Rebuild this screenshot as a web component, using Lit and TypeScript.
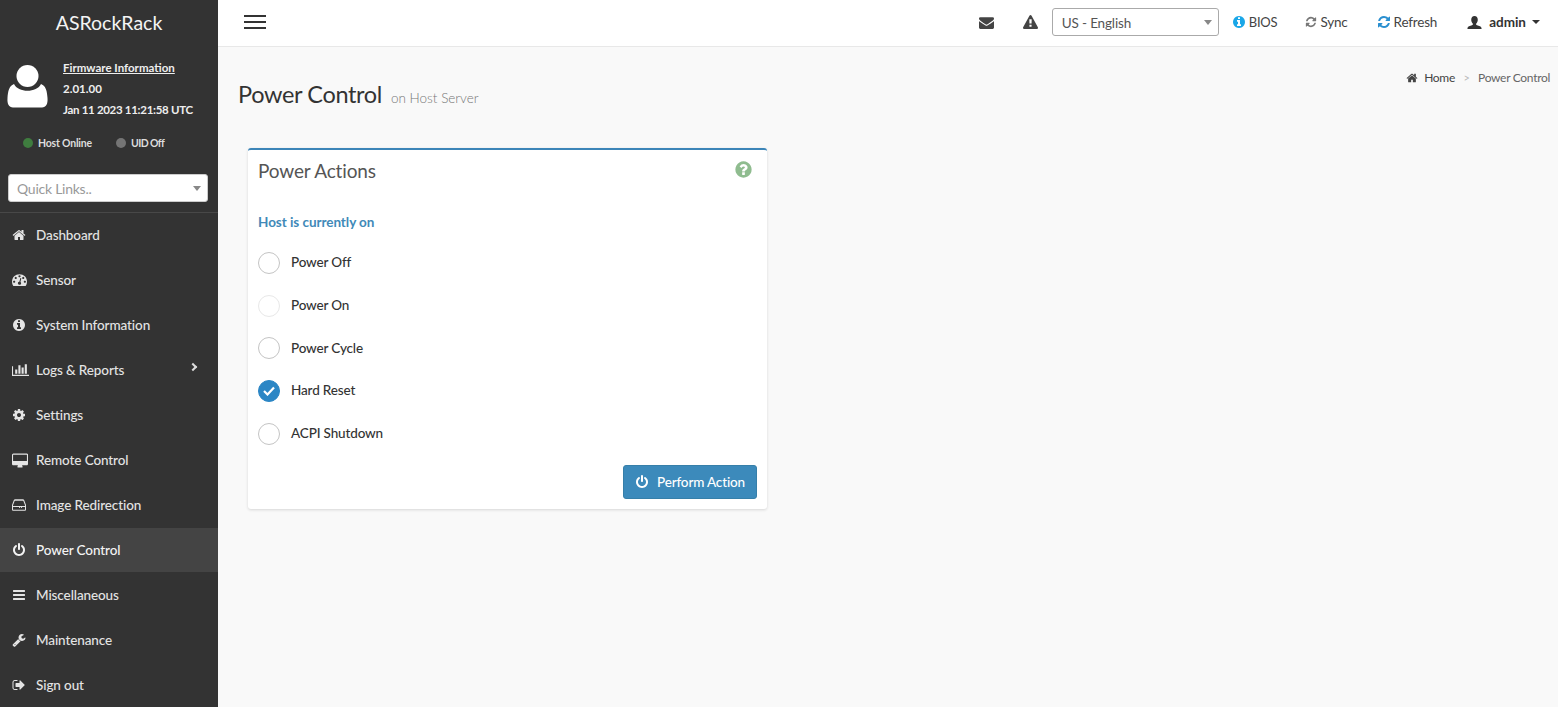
import { LitElement, html, css, svg } from "lit";
import { customElement } from "lit/decorators.js";

const P: Record<string, [number, string]> = {
  home: [1792, "M1472 992v480q0 26-19 45t-45 19h-384v-384h-256v384h-384q-26 0-45-19t-19-45v-480q0-1 .5-3t.5-3l575-474 575 474q1 2 1 6zm223-69l-62 74q-8 9-21 11h-3q-13 0-21-7l-692-577-692 577q-12 8-24 7-13-2-21-11l-62-74q-8-10-7-23.5t11-21.5l719-599q32-26 76-26t76 26l244 204v-195q0-14 9-23t23-9h192q14 0 23 9t9 23v408l219 182q10 8 11 21.5t-7 23.5z"],
  gauge: [1792, "M384 1152q0-53-37.5-90.5t-90.5-37.5-90.5 37.5-37.5 90.5 37.5 90.5 90.5 37.5 90.5-37.5 37.5-90.5zm192-448q0-53-37.5-90.5t-90.5-37.5-90.5 37.5-37.5 90.5 37.5 90.5 90.5 37.5 90.5-37.5 37.5-90.5zm428 481l101-382q6-26-7.5-48.5t-38.5-29.5-48 6.5-30 39.5l-101 382q-60 5-107 43.5t-63 98.5q-20 77 20 146t117 89 146-20 89-117q16-60-6-117t-72-91zm660-33q0-53-37.5-90.5t-90.5-37.5-90.5 37.5-37.5 90.5 37.5 90.5 90.5 37.5 90.5-37.5 37.5-90.5zm-640-640q0-53-37.5-90.5t-90.5-37.5-90.5 37.5-37.5 90.5 37.5 90.5 90.5 37.5 90.5-37.5 37.5-90.5zm448 192q0-53-37.5-90.5t-90.5-37.5-90.5 37.5-37.5 90.5 37.5 90.5 90.5 37.5 90.5-37.5 37.5-90.5zm320 448q0 261-141 483-19 29-54 29h-1402q-35 0-54-29-141-221-141-483 0-182 71-348t191-286 286-191 348-71 348 71 286 191 191 286 71 348z"],
  info: [1792, "M1152 1376v-160q0-14-9-23t-23-9h-96v-512q0-14-9-23t-23-9h-320q-14 0-23 9t-9 23v160q0 14 9 23t23 9h96v320h-96q-14 0-23 9t-9 23v160q0 14 9 23t23 9h448q14 0 23-9t9-23zm-128-896v-160q0-14-9-23t-23-9h-192q-14 0-23 9t-9 23v160q0 14 9 23t23 9h192q14 0 23-9t9-23zm640 416q0 209-103 385.5t-279.5 279.5-385.5 103-385.5-103-279.5-279.5-103-385.5 103-385.5 279.5-279.5 385.5-103 385.5 103 279.5 279.5 103 385.5z"],
  chart: [2048, "M640 896v512h-256v-512h256zm384-512v1024h-256v-1024h256zm1024 1152v128h-2048v-1152h128v1024h1920zm-640-896v768h-256v-768h256zm384-384v1152h-256v-1152h256z"],
  cog: [1792, "M1152 896q0-106-75-181t-181-75-181 75-75 181 75 181 181 75 181-75 75-181zm512-109v222q0 12-8 23t-20 13l-185 28q-19 54-39 91 35 50 107 138 10 12 10 25t-9 23q-27 37-99 108t-94 71q-12 0-26-9l-138-108q-44 23-91 38-16 136-29 186-7 28-36 28h-222q-14 0-24.5-8.5t-11.5-21.5l-28-184q-49-16-90-37l-141 107q-10 9-25 9-14 0-25-11-126-114-165-168-7-10-7-23 0-12 8-23 15-21 51-66.5t54-70.5q-27-50-41-99l-183-27q-13-2-21-12.5t-8-23.5v-222q0-12 8-23t19-13l186-28q14-46 39-92-40-57-107-138-10-12-10-24 0-10 9-23 26-36 98.5-107.5t94.5-71.5q13 0 26 10l138 107q44-23 91-38 16-136 29-186 7-28 36-28h222q14 0 24.5 8.5t11.5 21.5l28 184q49 16 90 37l142-107q9-9 24-9 13 0 25 10 129 119 165 170 7 8 7 22 0 12-8 23-15 21-51 66.5t-54 70.5q26 50 41 98l183 28q13 2 21 12.5t8 23.5z"],
  desktop: [1920, "M1792 992v-704q0-13-9.5-22.5t-22.5-9.5h-1600q-13 0-22.5 9.5t-9.5 22.5v704q0 13 9.5 22.5t22.5 9.5h1600q13 0 22.5-9.5t9.5-22.5zm128-704v1088q0 66-47 113t-113 47h-544q0 37 16 77.5t32 71 16 43.5q0 26-19 45t-45 19h-512q-26 0-45-19t-19-45q0-14 16-44t32-70 16-78h-544q-66 0-113-47t-47-113v-1088q0-66 47-113t113-47h1632q66 0 113 47t47 113z"],
  hdd: [1792, "M1040 1216a64 64 0 1 0 0 .1zm256 0a64 64 0 1 0 0 .1zM128 1024h1536v-96l-210-560q-8-22-30-22h-1056q-22 0-30 22l-210 560zm-128 0v-96q0-30 11-60l230-600q18-48 60-78t93-30h1004q51 0 93 30t60 78l230 600q11 30 11 60v544q0 66-47 113t-113 47h-1472q-66 0-113-47t-47-113zm160 128q-32 0-32 32v288q0 32 32 32h1472q32 0 32-32v-288q0-32-32-32z"],
  power: [1792, "M1664 896q0 156-61 298t-164 245-245 164-298 61-298-61-245-164-164-245-61-298q0-182 80.5-343t226.5-270q43-32 95.5-25t83.5 50q32 42 24.5 94.5t-49.5 84.5q-98 74-151.5 181t-53.5 228q0 104 40.5 198.5t109.5 163.5 163.5 109.5 198.5 40.5 198.5-40.5 163.5-109.5 109.5-163.5 40.5-198.5q0-121-53.5-228t-151.5-181q-42-32-49.5-84.5t24.5-94.5q31-43 84-50t95 25q146 109 226.5 270t80.5 343zm-640-768v640q0 52-38 90t-90 38-90-38-38-90v-640q0-52 38-90t90-38 90 38 38 90z"],
  bars: [1792, "M1664 1344v128q0 26-19 45t-45 19h-1408q-26 0-45-19t-19-45v-128q0-26 19-45t45-19h1408q26 0 45 19t19 45zm0-512v128q0 26-19 45t-45 19h-1408q-26 0-45-19t-19-45v-128q0-26 19-45t45-19h1408q26 0 45 19t19 45zm0-512v128q0 26-19 45t-45 19h-1408q-26 0-45-19t-19-45v-128q0-26 19-45t45-19h1408q26 0 45 19t19 45z"],
  wrench: [1792, "M448 1472q0-26-19-45t-45-19-45 19-19 45 19 45 45 19 45-19 19-45zm644-420l-682 682q-37 37-90 37-52 0-91-37l-106-108q-38-36-38-90 0-53 38-91l681-681q39 98 114.5 173.5t173.5 114.5zm634-435q0 39-23 106-47 134-164.5 217.5t-258.5 83.5q-185 0-316.5-131.5t-131.5-316.5 131.5-316.5 316.5-131.5q58 0 121.5 16.5t107.5 46.5q16 11 16 28t-16 28l-293 169v224l193 107q5-3 79-48.5t135.5-81 70.5-35.5q15 0 23.5 10t8.5 25z"],
  signout: [1792, "M704 1440q0 4 1 20t.5 26.5-3 23.5-10 19.5-20.5 6.5h-320q-119 0-203.5-84.5t-84.5-203.5v-704q0-119 84.5-203.5t203.5-84.5h320q13 0 22.5 9.5t9.5 22.5q0 4 1 20t.5 26.5-3 23.5-10 19.5-20.5 6.5h-320q-66 0-113 47t-47 113v704q0 66 47 113t113 47h312l11.5 1 11.5 3 8 5.5 7 9 2 13.5zm928-544q0 26-19 45l-544 544q-19 19-45 19t-45-19-19-45v-288h-448q-26 0-45-19t-19-45v-384q0-26 19-45t45-19h448v-288q0-26 19-45t45-19 45 19l544 544q19 19 19 45z"],
  envelope: [1792, "M1792 710v794q0 66-47 113t-113 47h-1472q-66 0-113-47t-47-113v-794q44 49 101 87 362 246 497 345 57 42 92.5 65.5t94.5 48 110 24.5h2q51 0 110-24.5t94.5-48 92.5-65.5q170-123 498-345 57-39 100-87zm0-294q0 79-49 151t-122 123q-376 261-468 325-10 7-42.5 30.5t-54 38-52 32.5-57.5 27-50 9h-2q-23 0-50-9t-57.5-27-52-32.5-54-38-42.5-30.5q-91-64-262-182.5t-205-142.5q-62-42-117-115.5t-55-136.5q0-78 41.5-130t118.5-52h1472q65 0 112.5 47t47.5 113z"],
  warning: [1792, "M1024 1375v-190q0-14-9.5-23.5t-22.5-9.5h-192q-13 0-22.5 9.5t-9.5 23.5v190q0 14 9.5 23.5t22.5 9.5h192q13 0 22.5-9.5t9.5-23.5zm-2-374l18-459q0-12-10-19-13-11-24-11h-220q-11 0-24 11-10 7-10 21l17 457q0 10 10 16.5t24 6.5h185q14 0 23.5-6.5t10.5-16.5zm-14-934l768 1408q35 63-2 126-17 29-46.5 46t-63.5 17h-1536q-34 0-63.5-17t-46.5-46q-37-63-2-126l768-1408q17-31 47-49t65-18 65 18 47 49z"],
  refresh: [1792, "M1639 1056q0 5-1 7-64 268-268 434.5t-478 166.5q-146 0-282.5-55t-243.5-157l-129 129q-19 19-45 19t-45-19-19-45v-448q0-26 19-45t45-19h448q26 0 45 19t19 45-19 45l-137 137q71 66 161 102t187 36q134 0 250-65t186-179q11-17 53-117 8-23 30-23h192q13 0 22.5 9.5t9.5 22.5zm25-800v448q0 26-19 45t-45 19h-448q-26 0-45-19t-19-45 19-45l138-138q-148-137-349-137-134 0-250 65t-186 179q-11 17-53 117-8 23-30 23h-199q-13 0-22.5-9.5t-9.5-22.5v-7q65-268 270-434.5t480-166.5q146 0 284 55.5t245 156.5l130-129q19-19 45-19t45 19 19 45z"],
  question: [1792, "M1024 1376v-192q0-14-9-23t-23-9h-192q-14 0-23 9t-9 23v192q0 14 9 23t23 9h192q14 0 23-9t9-23zm256-672q0-88-55.5-163t-138.5-116-170-41q-243 0-371 213-15 24 8 42l132 100q7 6 19 6 16 0 25-12 53-68 86-92 34-24 86-24 48 0 85.5 26t37.5 59q0 38-20 61t-68 45q-63 28-115.5 86.5t-52.5 125.5v36q0 14 9 23t23 9h192q14 0 23-9t9-23q0-19 21.5-49.5t54.5-49.5q32-18 49-28.5t46-35 44.5-48 28-60.5 12.5-81zm384 192q0 209-103 385.5t-279.5 279.5-385.5 103-385.5-103-279.5-279.5-103-385.5 103-385.5 279.5-279.5 385.5-103 385.5 103 279.5 279.5 103 385.5z"],
};

const icon = (name: string, size: number) => {
  const [w, d] = P[name];
  return html`<svg class="ico" width=${size} height=${size} viewBox="0 0 ${w} 1792" fill="currentColor">${svg`<path d=${d}></path>`}</svg>`;
};

const MENU: [string, string, number][] = [
  ["home", "Dashboard", 14], ["gauge", "Sensor", 15], ["info", "System Information", 14], ["chart", "Logs & Reports", 17],
  ["cog", "Settings", 14], ["desktop", "Remote Control", 16], ["hdd", "Image Redirection", 14], ["power", "Power Control", 14],
  ["bars", "Miscellaneous", 14], ["wrench", "Maintenance", 14], ["signout", "Sign out", 14],
];
const OPTIONS = ["Power Off", "Power On", "Power Cycle", "Hard Reset", "ACPI Shutdown"];

@customElement("app-root")
export class AppRoot extends LitElement {
  static styles = css`
    :host { display: flex; height: 707px; overflow: hidden; font-family: "Lato", "Liberation Sans", sans-serif; font-size: 14px; color: #333; background: #f9f9f9; }
    * { box-sizing: border-box; }
    .ico { display: block; flex: none; }
    .side { width: 218px; flex: none; background: #333; color: #e6e6e6; display: flex; flex-direction: column; overflow: hidden; }
    .side > * { flex: none; }
    .brand { height: 44px; display: flex; align-items: center; justify-content: center; color: #f4f4f4; font-size: 19.5px; }
    .user { height: 80px; padding: 7px 0 0 7px; display: flex; gap: 15px; }
    .avatar { width: 41px; height: 44px; margin-top: 14px; flex: none; }
    .fw { font-size: 11.5px; font-weight: 700; line-height: 21px; color: #eee; display: flex; flex-direction: column; padding-top: 6px; }
    .fw u { text-decoration: underline; }
    .fw .date { letter-spacing: -.3px; }
    .status { display: flex; padding-left: 23px; font-size: 10.5px; font-weight: 700; letter-spacing: -.2px; color: #ddd; height: 24px; align-items: center; margin-top: 7px; }
    .status span { display: flex; align-items: center; gap: 5px; }
    .status span + span { margin-left: 24px; letter-spacing: -.6px; }
    .dot { width: 10px; height: 10px; border-radius: 50%; background: #3f7d3f; }
    .dot.off { background: #757575; }
    .ql { margin: 19px 10px 0 8px; height: 28px; background: #fff; border-radius: 3px; border: 1px solid #ccc; display: flex; align-items: center; justify-content: space-between; padding: 0 6px 0 8px; color: #999; font-size: 14px; letter-spacing: -.25px; }
    .tri { width: 0; height: 0; border-left: 4px solid transparent; border-right: 4px solid transparent; border-top: 5px solid #888; }
    .menu { margin-top: 10px; border-top: 1px solid #484848; }
    .item { height: 45px; display: flex; align-items: center; padding: 0 0 2px 12px; font-weight: 500; color: #e4e4e4; font-size: 13.5px; letter-spacing: -.1px; position: relative; }
    .item .slot { width: 24px; flex: none; }
    .item.active { background: #444; color: #f4f4f4; height: 44px; margin-bottom: 1px; padding-bottom: 0; }
    .chev { position: absolute; right: 22px; top: 16px; width: 6px; height: 6px; border-right: 2px solid #ddd; border-top: 2px solid #ddd; transform: rotate(45deg); }

    .main { flex: 1; display: flex; flex-direction: column; min-width: 0; }
    .top { height: 47px; flex: none; background: #fff; border-bottom: 1px solid #e8e8e8; display: flex; align-items: center; padding: 0 18px 2px 26px; }
    .burger { display: flex; flex-direction: column; gap: 4px; width: 22px; margin-right: auto; }
    .burger i { display: block; height: 2px; background: #333; }
    .tool { display: flex; align-items: center; color: #444; font-size: 13.5px; letter-spacing: -.2px; gap: 3px; }
    .tool b { font-weight: 400; color: #444; }
    .ml29 { margin-left: 29px; }
    .ml28 { margin-left: 28px; }
    .ml30 { margin-left: 30px; }
    .ml13 { margin-left: 13px; }
    .sel { width: 167px; height: 28px; margin-left: 14px; border: 1px solid #aaa; border-radius: 3px; display: flex; align-items: center; justify-content: space-between; padding: 1px 6px 0 9px; color: #555; font-size: 13.5px; letter-spacing: -.15px; }
    .bios { color: #1aa7e8; }
    .bios b { font-size: 13px; }
    .sync { color: #777; }
    .rf { color: #2a8fd0; }
    .admin { font-weight: 700; color: #333; gap: 7px; letter-spacing: 0; }
    .caret { width: 0; height: 0; border-left: 4px solid transparent; border-right: 4px solid transparent; border-top: 4px solid #333; margin-left: -1px; }
    .content { flex: 1; padding: 0 8px 0 20px; }
    .head { display: flex; align-items: flex-start; justify-content: space-between; height: 101px; }
    .h1 { font-size: 23.5px; font-weight: 400; color: #333; margin-top: 32px; line-height: 30px; display: flex; align-items: baseline; gap: 9px; letter-spacing: -.35px; }
    .h1 small { font-size: 13.5px; font-weight: 300; color: #777; letter-spacing: 0; }
    .crumb { display: flex; align-items: center; margin-top: 23px; font-size: 12px; letter-spacing: -.3px; color: #444; gap: 6px; }
    .crumb .sep { color: #bbb; margin: 0 2.5px; font-size: 11px; }
    .crumb .cur { color: #666; }
    .card { margin-left: 10px; width: 519px; height: 361px; background: #fff; border-top: 2px solid #3c85b8; border-radius: 3px; box-shadow: 0 1px 3px rgba(0,0,0,.14); padding: 0 10px; position: relative; display: flex; flex-direction: column; }
    .title { font-size: 19px; font-weight: 400; color: #555; margin-top: 9px; line-height: 24px; letter-spacing: -.15px; }
    .help { position: absolute; right: 14px; top: 10px; color: #8fbc8f; }
    .cur-state { margin-top: 30px; line-height: 18px; font-weight: 700; font-size: 13.5px; letter-spacing: -.05px; color: #4189b8; }
    .opts { margin-top: 10px; }
    .opt { height: 42.7px; display: flex; align-items: center; gap: 11px; font-weight: 500; font-size: 13.5px; letter-spacing: -.15px; color: #333; }
    .radio { width: 22px; height: 22px; margin-top: 1px; border-radius: 50%; border: 1px solid #c4c4c4; background: #fff; flex: none; display: flex; align-items: center; justify-content: center; }
    .radio.dis { border-color: #e8e8e8; }
    .radio.on { background: #2b86c5; border-color: #2b86c5; }
    .foot { display: flex; justify-content: flex-end; margin-top: 11px; }
    .btn { width: 134px; height: 34px; background: #3c8abb; border: 1px solid #367fa9; border-radius: 3px; color: #fff; display: flex; align-items: center; justify-content: center; gap: 8px; font-weight: 500; font-size: 13.5px; letter-spacing: -.15px; }
  `;

  render() {
    return html`
      <aside class="side">
        <div class="brand">ASRockRack</div>
        <div class="user">
          <svg class="avatar" viewBox="0 0 41 44" fill="#fff"><circle cx="20.5" cy="11" r="11"></circle><path d="M7 19C2 21 1 26 .5 33 0 39 2 42.500 6 42.500h29c4 0 6-3.500 5.500-9.500C40 26 39 21 34 19c-4 9-23 9-27 0z"></path></svg>
          <div class="fw"><u>Firmware Information</u><span>2.01.00</span><span class="date">Jan 11 2023 11:21:58 UTC</span></div>
        </div>
        <div class="status"><span><i class="dot"></i>Host Online</span><span><i class="dot off"></i>UID Off</span></div>
        <div class="ql">Quick Links..<i class="tri"></i></div>
        <nav class="menu">
          ${MENU.map(([ic, label, size]) => html`
            <div class="item ${label === "Power Control" ? "active" : ""}">
              <span class="slot">${icon(ic, size)}</span>${label}
              ${label === "Logs & Reports" ? html`<i class="chev"></i>` : ""}
            </div>`)}
        </nav>
      </aside>
      <div class="main">
        <header class="top">
          <div class="burger"><i></i><i></i><i></i></div>
          <span class="tool">${icon("envelope", 15)}</span>
          <span class="tool ml29">${icon("warning", 15)}</span>
          <div class="sel">US - English<i class="tri"></i></div>
          <span class="tool bios ml13">${icon("info", 14)}<b>BIOS</b></span>
          <span class="tool sync ml28">${icon("refresh", 12)}<b>Sync</b></span>
          <span class="tool rf ml29">${icon("refresh", 14)}<b>Refresh</b></span>
          <span class="tool admin ml30">
            <svg class="ico" width="15" height="15" viewBox="0 0 16 16" fill="currentColor"><path d="M8 1c2.200 0 3.500 1.700 3.500 4 0 1.800-.8 3.300-1.800 4.200-.1.900.2 1.300 1 1.700 2 .8 4.800 1.300 4.800 3.100v1H.5v-1c0-1.800 2.800-2.300 4.800-3.100.8-.4 1.100-.8 1-1.700C5.300 8.300 4.500 6.800 4.500 5 4.500 2.700 5.800 1 8 1z"></path></svg>
            <span>admin</span><i class="caret"></i>
          </span>
        </header>
        <div class="content">
          <div class="head">
            <div class="h1">Power Control <small>on Host Server</small></div>
            <div class="crumb">${icon("home", 12)}<span>Home</span><span class="sep">&gt;</span><span class="cur">Power Control</span></div>
          </div>
          <section class="card">
            <div class="title">Power Actions</div>
            <span class="help">${icon("question", 19)}</span>
            <div class="cur-state">Host is currently on</div>
            <div class="opts">
              ${OPTIONS.map((o) => html`
                <div class="opt">
                  <span class="radio ${o === "Hard Reset" ? "on" : ""} ${o === "Power On" ? "dis" : ""}">
                    ${o === "Hard Reset" ? html`<svg width="12" height="10" viewBox="0 0 12 10" fill="none" stroke="#fff" stroke-width="2.200"><path d="M1 5l3.500 3.500L11 1.500"></path></svg>` : ""}
                  </span>
                  ${o}
                </div>`)}
            </div>
            <div class="foot"><div class="btn">${icon("power", 14)}Perform Action</div></div>
          </section>
        </div>
      </div>
    `;
  }
}
